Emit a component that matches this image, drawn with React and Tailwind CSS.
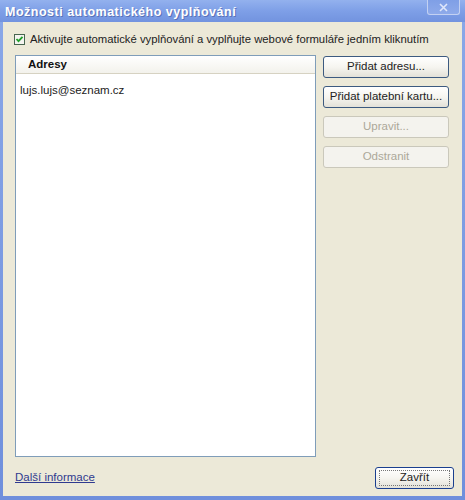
import React from "react";

const font = { fontFamily: '"Liberation Sans", Arial, sans-serif' };

const XpButton = ({ children, disabled, isDefault, className = "" }) => {
  if (disabled) {
    return (
      <div
        className={`flex items-center justify-center h-[22px] rounded-[3px] border border-[#cac8bb] bg-[#f4f3ee] text-[#aca899] text-[11.5px] ${className}`}
      >
        {children}
      </div>
    );
  }
  return (
    <div
      className={`flex items-center justify-center h-[22px] rounded-[3px] border ${
        isDefault ? "border-[#1a3f8f]" : "border-[#3c5a80]"
      } bg-gradient-to-b from-[#ffffff] via-[#f6f5f0] to-[#e3e1d8] text-[#222] text-[11.5px] ${className}`}
    >
      {isDefault ? (
        <div className="flex items-center justify-center w-[calc(100%-6px)] h-[16px] border border-dotted border-[#777]">
          {children}
        </div>
      ) : (
        children
      )}
    </div>
  );
};

export default function App() {
  return (
    <div
      className="w-[465px] h-[500px] flex flex-col bg-gradient-to-b from-[#8aa8e8] to-[#6f8fdc] overflow-hidden"
      style={font}
    >
      {/* title bar */}
      <div className="h-[22px] flex items-start justify-between bg-gradient-to-b from-[#93b1ee] via-[#7e9fe7] to-[#7293df]">
        <div className="pl-[5px] pt-[3px] text-white font-bold text-[12.5px] tracking-[0.5px] [text-shadow:1px_1px_0_#5a72b8]">
          Možnosti automatického vyplňování
        </div>
        <div className="mr-[5px] w-[33px] h-[15px] rounded-b-[3px] border border-t-0 border-[#c3d1f2] bg-gradient-to-b from-[#7f9fe6] to-[#8eaaea] flex items-center justify-center">
          <svg width="9" height="9" viewBox="0 0 9 9">
            <path d="M1 1 L8 8 M8 1 L1 8" stroke="#dfe7fa" strokeWidth="1.6" />
          </svg>
        </div>
      </div>

      {/* body */}
      <div className="flex-1 mx-[3px] mb-[4px] bg-[#ece9d8] flex flex-col pl-[11px] pt-[12px] pr-[8px]">
        <div className="flex items-center h-[10px]">
          <svg width="11" height="11" viewBox="0 0 11 11" className="shrink-0">
            <rect x="0.5" y="0.5" width="10" height="10" fill="#f4f4f0" stroke="#48664f" />
            <path d="M2.5 5 L4.5 7.2 L8.5 2.8" stroke="#22a02a" strokeWidth="1.8" fill="none" />
          </svg>
          <span className="ml-[5px] text-[11.3px] text-[#222] whitespace-nowrap">
            Aktivujte automatické vyplňování a vyplňujte webové formuláře jedním kliknutím
          </span>
        </div>

        <div className="flex mt-[11px] ml-[1px]">
          <div className="w-[301px] h-[402px] border border-[#7f9db9] bg-white flex flex-col">
            <div className="h-[18px] flex items-center pl-[12px] bg-gradient-to-b from-[#ffffff] to-[#f3f2ec] border-b border-[#d6d2c2]">
              <span className="font-bold text-[11.5px] text-[#111]">Adresy</span>
            </div>
            <div className="pl-[4px] mt-[8px] text-[11.5px] text-[#222]">lujs.lujs@seznam.cz</div>
          </div>

          <div className="ml-[7px] w-[126px] flex flex-col gap-[8px] pt-[1px]">
            <XpButton>Přidat adresu...</XpButton>
            <XpButton>Přidat platební kartu...</XpButton>
            <XpButton disabled>Upravit...</XpButton>
            <XpButton disabled>Odstranit</XpButton>
          </div>
        </div>

        <div className="flex items-center justify-between mt-[10px] ml-[1px]">
          <span className="text-[11.5px] text-[#2f3a8f] underline">Další informace</span>
          <XpButton isDefault className="w-[79px]">
            Zavřít
          </XpButton>
        </div>
      </div>
    </div>
  );
}
